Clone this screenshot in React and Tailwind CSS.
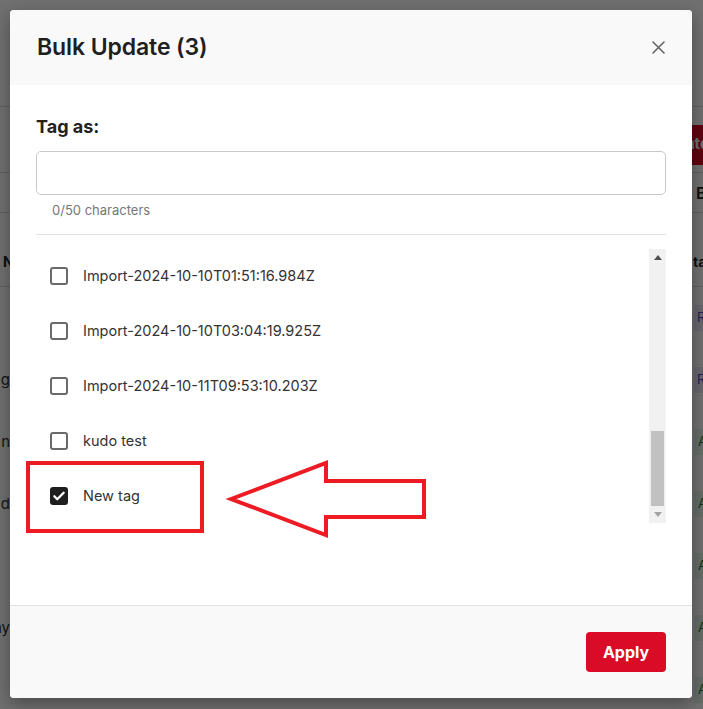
import React, { useState } from 'react';

const tags = [
  { id: 1, name: 'Import-2024-10-10T01:51:16.984Z', checked: false },
  { id: 2, name: 'Import-2024-10-10T03:04:19.925Z', checked: false },
  { id: 3, name: 'Import-2024-10-11T09:53:10.203Z', checked: false },
  { id: 4, name: 'kudo test', checked: false },
  { id: 5, name: 'New tag', checked: true },
];

const rows = [
  { left: '', badge: 'R', tone: 'purple' },
  { left: 'g', badge: 'R', tone: 'purple' },
  { left: 'n', badge: 'A', tone: 'green' },
  { left: 'd', badge: 'A', tone: 'green' },
  { left: '', badge: 'A', tone: 'green' },
  { left: 'ny', badge: 'A', tone: 'green' },
  { left: '', badge: 'A', tone: 'green' },
];

const Checkbox = ({ checked, onChange }) => (
  <button
    onClick={onChange}
    className={
      checked
        ? 'w-[18px] h-[18px] rounded-[3px] bg-[#1e1e1e] flex items-center justify-center shrink-0'
        : 'w-[18px] h-[18px] rounded-[3px] border-2 border-[#6a6a6a] bg-white shrink-0'
    }
  >
    {checked && (
      <svg width="14" height="14" viewBox="0 0 24 24" fill="none" stroke="white" strokeWidth="4" strokeLinecap="round" strokeLinejoin="round">
        <path d="M4 12.5l5 5L20 6.5" />
      </svg>
    )}
  </button>
);

// background page, dimmed behind the dialog
const BackgroundPage = () => (
  <div className="w-[703px] h-[709px] bg-white text-[#222]">
    <div className="h-[107px] border-b border-[#ddd]" />
    <div className="h-[66px] flex items-center pt-[10px] pl-[640px] border-b border-[#ddd]">
      <div className="h-[40px] px-4 rounded bg-[#d90b26] text-white font-bold text-[15px] flex items-center whitespace-nowrap">
        Update
      </div>
    </div>
    <div className="h-[40px] flex items-center pl-[696px] border-b border-[#ddd] text-[16px] font-semibold">
      <span className="whitespace-nowrap">Bulk</span>
    </div>
    <div className="h-[74px] flex items-center justify-between pt-[24px] border-b border-[#ddd] text-[14px] font-bold">
      <span className="pl-[3px]">N</span>
      <span className="w-[10px] overflow-hidden whitespace-nowrap">tatus</span>
    </div>
    {rows.map((row, index) => (
      <div key={index} className="h-[62px] flex items-center justify-between text-[15px]">
        <div className="w-[10px] overflow-hidden flex justify-end whitespace-nowrap text-[#333]">{row.left}</div>
        <div
          className={
            row.tone === 'purple'
              ? 'w-[9px] overflow-hidden whitespace-nowrap bg-[#ece8fb] text-[#5b46c9] text-[13px] py-[3px] pl-[3px]'
              : 'w-[9px] overflow-hidden whitespace-nowrap bg-[#e6f6ea] text-[#1c7a3a] text-[13px] py-[3px] pl-[4px]'
          }
        >
          {row.badge}
        </div>
      </div>
    ))}
  </div>
);

const App = () => {
  const [items, setItems] = useState(tags);
  const [tagName, setTagName] = useState('');

  const toggle = (id) => {
    setItems(items.map((item) => (item.id === id ? { ...item, checked: !item.checked } : item)));
  };

  return (
    <div className="relative w-[703px] h-[709px] overflow-hidden" style={{ fontFamily: 'Inter, "Noto Sans", sans-serif' }}>
      <BackgroundPage />

      {/* --- Overlay + dialog --- */}
      <div className="absolute inset-0 bg-black/[0.56] p-[10px]">
        <div className="w-[682px] h-[688px] bg-white rounded-[4px] shadow-[0_6px_18px_rgba(0,0,0,0.35)] flex flex-col overflow-hidden">
          <div className="h-[75px] bg-[#f9f9f9] flex items-center justify-between pl-[27px] pr-[27px] shrink-0">
            <h2 className="text-[23px] font-semibold text-[#1f1f1f] tracking-[-0.1px]">Bulk Update (3)</h2>
            <button className="w-[14px] h-[14px] flex items-center justify-center">
              <svg width="13" height="13" viewBox="0 0 13 13" fill="none" stroke="#666" strokeWidth="1.6" strokeLinecap="round">
                <path d="M1 1l11 11M12 1L1 12" />
              </svg>
            </button>
          </div>

          <div className="flex-1 px-[26px] pt-[30px]">
            <div className="text-[18px] font-bold text-[#222] leading-[24px]">Tag as:</div>
            <input
              value={tagName}
              onChange={(e) => setTagName(e.target.value.slice(0, 50))}
              className="mt-[12px] w-full h-[44px] border border-[#c8c8c8] rounded-[5px] px-3 text-[15px] outline-none"
            />
            <div className="mt-[6px] pl-[16px] text-[13px] leading-[18px] text-[#777]">{tagName.length}/50 characters</div>
            <div className="mt-[15px] border-t border-[#e2e2e2]" />

            <div className="mt-[13px] h-[275px] flex">
              <div className="flex-1 overflow-hidden">
                {items.map((item) => (
                  <label key={item.id} className="h-[55px] flex items-center gap-[15px] pl-[14px] cursor-pointer">
                    <Checkbox checked={item.checked} onChange={() => toggle(item.id)} />
                    <span className="text-[14.5px] text-[#333]">{item.name}</span>
                  </label>
                ))}
              </div>
              {/* scrollbar, scrolled to the end */}
              <div className="w-[17px] h-[274px] mt-[1px] bg-[#f1f1f1] flex flex-col items-center">
                <div className="h-[17px] flex items-center justify-center">
                  <svg width="8" height="5" viewBox="0 0 8 5"><path d="M0 5L4 0L8 5Z" fill="#505050" /></svg>
                </div>
                <div className="flex-1 w-full flex flex-col justify-end px-[2px]">
                  <div className="h-[75px] bg-[#c1c1c1]" />
                </div>
                <div className="h-[17px] flex items-center justify-center">
                  <svg width="8" height="5" viewBox="0 0 8 5"><path d="M0 0L8 0L4 5Z" fill="#a3a3a3" /></svg>
                </div>
              </div>
            </div>
          </div>

          <div className="h-[93px] shrink-0 bg-[#f9f9f9] border-t border-[#e0e0e0] flex items-center justify-end pr-[26px]">
            <button className="w-[80px] h-[40px] rounded-[4px] bg-[#d90b26] text-white font-bold text-[16px]">Apply</button>
          </div>
        </div>
      </div>

      {/* --- Annotation drawn over the screenshot --- */}
      <svg className="absolute inset-0 pointer-events-none" width="703" height="709">
        <rect x="28" y="463" width="174" height="68" fill="none" stroke="#ed1c24" strokeWidth="4" />
        <polygon
          points="231,499 326,463 326,481 424,481 424,517 326,517 326,535"
          fill="none"
          stroke="#ed1c24"
          strokeWidth="4"
          strokeLinejoin="miter"
        />
      </svg>
    </div>
  );
};

export default App;
